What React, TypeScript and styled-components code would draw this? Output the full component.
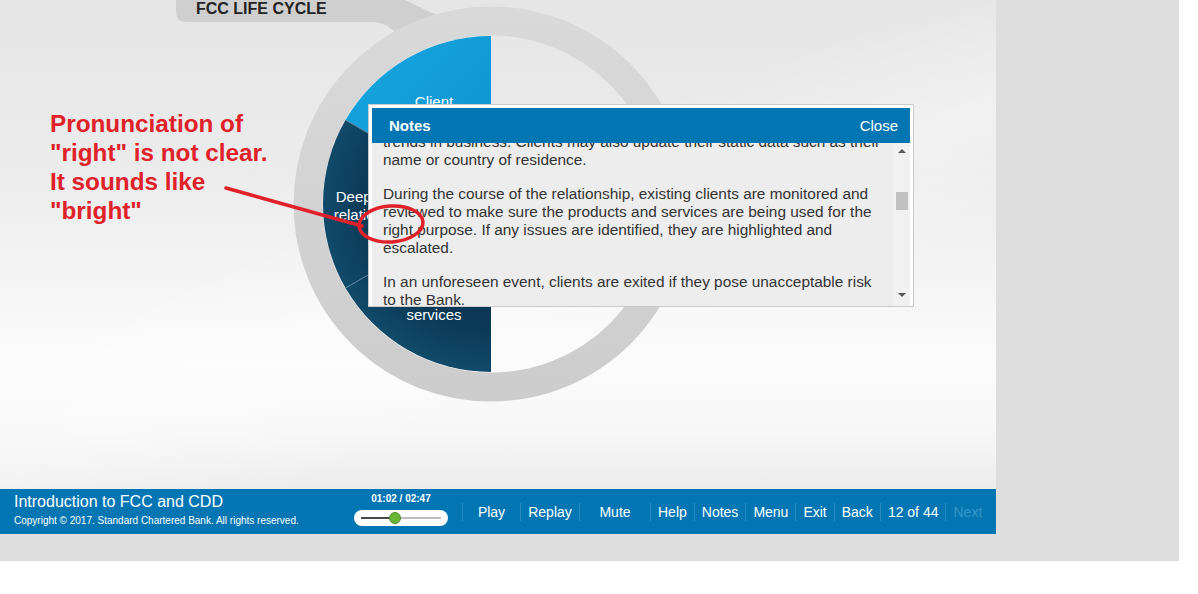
import React from "react";
import styled, { createGlobalStyle } from "styled-components";

const GlobalStyle = createGlobalStyle`
  html, body { margin: 0; padding: 0; background: #ffffff; }
  body { font-family: "Liberation Sans", Arial, sans-serif; }
  * { box-sizing: border-box; }
`;

const Frame = styled.div`
  width: 1179px;
  height: 561px;
  background: #dedede;
`;

const Player = styled.div`
  width: 996px;
  display: flex;
  flex-direction: column;
`;

const Stage = styled.div`
  position: relative;
  height: 489px;
  overflow: hidden;
  background:
    linear-gradient(160deg, rgba(255,255,255,0) 40%, rgba(255,255,255,0.35) 55%, rgba(255,255,255,0) 70%),
    linear-gradient(180deg, #e6e6e6 0%, #ececec 35%, #f5f5f5 58%, #fcfcfc 74%, #f7f7f7 88%, #ededed 100%);
`;

const Diagram = styled.svg`
  display: block;
`;

const Overlay = styled.svg`
  position: absolute;
  left: 0;
  top: 0;
  pointer-events: none;
`;

const Annotation = styled.div`
  position: absolute;
  left: 50px;
  top: 109px;
  color: #e0212a;
  font-weight: bold;
  font-size: 24.3px;
  line-height: 29px;
  white-space: nowrap;
`;

const NotesPanel = styled.div`
  position: absolute;
  left: 368px;
  top: 104px;
  width: 546px;
  height: 203px;
  border: 1px solid #cbcbcb;
  background: #ffffff;
  padding: 3px 3px 0 3px;
  display: flex;
  flex-direction: column;
`;

const NotesHeader = styled.div`
  height: 35px;
  background: #0276b3;
  color: #ffffff;
  display: flex;
  align-items: center;
  justify-content: space-between;
  padding: 0 12px 0 17px;
`;

const NotesTitle = styled.span`
  font-weight: bold;
  font-size: 15px;
`;

const CloseButton = styled.span`
  font-size: 15px;
`;

const NotesBody = styled.div`
  flex: 1;
  display: flex;
  background: #ededed;
  overflow: hidden;
`;

const NotesViewport = styled.div`
  flex: 1;
  overflow: hidden;
  padding-left: 11px;
`;

const NotesText = styled.div<{ $offset: number }>`
  transform: translateY(${(p) => -p.$offset}px);
  color: #333333;
  font-size: 15.4px;
  line-height: 18px;
`;

const Paragraph = styled.p`
  margin: 0 0 16px 0;
`;

const Line = styled.span`
  display: block;
  white-space: nowrap;
`;

const ScrollBar = styled.div`
  width: 17px;
  background: #f1f1f1;
  position: relative;
  display: flex;
  flex-direction: column;
  align-items: center;
  justify-content: space-between;
  padding: 6px 0 9px 0;
`;

const Arrow = styled.span<{ $down?: boolean }>`
  width: 0;
  height: 0;
  border-left: 4px solid transparent;
  border-right: 4px solid transparent;
  ${(p) => (p.$down ? "border-top: 4px solid #555;" : "border-bottom: 4px solid #555;")}
`;

const Thumb = styled.span`
  position: absolute;
  left: 3px;
  top: 49px;
  width: 12px;
  height: 18px;
  background: #c1c1c1;
`;

const Footer = styled.footer`
  height: 45px;
  background: #0276b3;
  color: #ffffff;
  display: flex;
  padding-left: 14px;
`;

const CourseInfo = styled.div`
  width: 340px;
  display: flex;
  flex-direction: column;
  padding-top: 3px;
`;

const CourseTitle = styled.div`
  font-size: 16px;
  line-height: 20px;
`;

const Copyright = styled.div`
  font-size: 10px;
  line-height: 14px;
  margin-top: 2px;
`;

const TimeBlock = styled.div`
  width: 94px;
  display: flex;
  flex-direction: column;
  align-items: center;
  padding-top: 4px;
`;

const TimeText = styled.div`
  font-size: 10px;
  font-weight: bold;
  line-height: 12px;
`;

const SliderPill = styled.div`
  margin-top: 5px;
  width: 94px;
  height: 16px;
  border-radius: 8px;
  background: #ffffff;
  position: relative;
  display: flex;
  align-items: center;
  padding: 0 7px;
`;

const Track = styled.div`
  flex: 1;
  height: 2px;
  background: #bdbdbd;
  position: relative;
`;

const TrackFill = styled.div`
  position: absolute;
  left: 0;
  top: 0;
  height: 2px;
  background: #4a4a4a;
`;

const Knob = styled.span`
  position: absolute;
  top: -5px;
  width: 12px;
  height: 12px;
  margin-left: -6px;
  border-radius: 50%;
  background: #6ab536;
  border: 1px solid #4e8f28;
`;

const Nav = styled.nav`
  display: flex;
  align-items: center;
  margin-left: 14px;
`;

const NavItem = styled.span<{ $width?: number; $disabled?: boolean }>`
  height: 18px;
  line-height: 18px;
  font-size: 14px;
  border-left: 1px solid #2a8cc2;
  padding: 0 7px;
  text-align: center;
  white-space: nowrap;
  ${(p) => (p.$width ? `width: ${p.$width}px;` : "")}
  color: ${(p) => (p.$disabled ? "#3a94c6" : "#ffffff")};
`;

const C = { x: 491, y: 204 };

const navItems: { label: string; width?: number; disabled?: boolean }[] = [
  { label: "Play", width: 58 },
  { label: "Replay", width: 59 },
  { label: "Mute", width: 71 },
  { label: "Help" },
  { label: "Notes" },
  { label: "Menu" },
  { label: "Exit" },
  { label: "Back" },
  { label: "12 of 44" },
  { label: "Next", disabled: true },
];

function LifeCycle() {
  return (
    <Diagram width={996} height={489} viewBox="0 0 996 489">
      <defs>
        <linearGradient id="ringGrad" x1="0" y1="0" x2="0" y2="1">
          <stop offset="0" stopColor="#d9d9d9" />
          <stop offset="1" stopColor="#cdcdcd" />
        </linearGradient>
        <linearGradient id="blueGrad" x1="0" y1="0" x2="1" y2="1">
          <stop offset="0" stopColor="#18a6de" />
          <stop offset="1" stopColor="#0a92d0" />
        </linearGradient>
        <radialGradient id="navyGrad" cx={C.x} cy={C.y} r={168} gradientUnits="userSpaceOnUse">
          <stop offset="0" stopColor="#06293f" />
          <stop offset="0.75" stopColor="#0b3a57" />
          <stop offset="1" stopColor="#114a69" />
        </radialGradient>
      </defs>
      <path
        d="M176,0 H405 L447,20 L398,36 Q388,22 372,22 H186 Q176,22 176,12 Z"
        fill="#cfcfcf"
      />
      <text x={196} y={14} fontFamily="Liberation Sans, Arial, sans-serif" fontWeight="bold" fontSize={16} fill="#222">
        FCC LIFE CYCLE
      </text>
      <circle cx={C.x} cy={C.y} r={183} fill="none" stroke="url(#ringGrad)" strokeWidth={29} />
      <path d={`M${C.x},${C.y} L491,36 A168,168 0 0 0 345.5,120 Z`} fill="url(#blueGrad)" />
      <path d={`M${C.x},${C.y} L345.5,120 A168,168 0 0 0 345.5,288 Z`} fill="url(#navyGrad)" />
      <path d={`M${C.x},${C.y} L345.5,288 A168,168 0 0 0 491,372 Z`} fill="url(#navyGrad)" />
      <line x1={C.x} y1={C.y} x2={345.5} y2={120} stroke="#5f86a0" strokeWidth={1} />
      <line x1={C.x} y1={C.y} x2={345.5} y2={288} stroke="#5f86a0" strokeWidth={1} />
      <g fontFamily="Liberation Sans, Arial, sans-serif" fontSize={15} fill="#ffffff" textAnchor="middle">
        <text x={434} y={107}>Client</text>
        <text x={372} y={202}>Deepening</text>
        <text x={372} y={220}>relationship</text>
        <text x={434} y={320}>services</text>
      </g>
    </Diagram>
  );
}

function Notes() {
  return (
    <NotesPanel>
      <NotesHeader>
        <NotesTitle>Notes</NotesTitle>
        <CloseButton>Close</CloseButton>
      </NotesHeader>
      <NotesBody>
        <NotesViewport>
          <NotesText $offset={10}>
            <Paragraph>
              <Line>trends in business. Clients may also update their static data such as their</Line>
              <Line>name or country of residence.</Line>
            </Paragraph>
            <Paragraph>
              <Line>During the course of the relationship, existing clients are monitored and</Line>
              <Line>reviewed to make sure the products and services are being used for the</Line>
              <Line>right purpose. If any issues are identified, they are highlighted and</Line>
              <Line>escalated.</Line>
            </Paragraph>
            <Paragraph>
              <Line>In an unforeseen event, clients are exited if they pose unacceptable risk</Line>
              <Line>to the Bank.</Line>
            </Paragraph>
          </NotesText>
        </NotesViewport>
        <ScrollBar>
          <Arrow />
          <Thumb />
          <Arrow $down />
        </ScrollBar>
      </NotesBody>
    </NotesPanel>
  );
}

export default function App() {
  const progress = 34;
  return (
    <>
      <GlobalStyle />
      <Frame>
        <Player>
          <Stage>
            <LifeCycle />
            <Notes />
            <Annotation>
              Pronunciation of
              <br />
              "right" is not clear.
              <br />
              It sounds like
              <br />
              "bright"
            </Annotation>
            <Overlay width={996} height={489} viewBox="0 0 996 489">
              <line x1={226} y1={188} x2={362} y2={226} stroke="#e0212a" strokeWidth={3.5} strokeLinecap="round" />
              <ellipse cx={391} cy={224} rx={32} ry={18} fill="none" stroke="#e0212a" strokeWidth={3.5} transform="rotate(-4 391 224)" />
            </Overlay>
          </Stage>
          <Footer>
            <CourseInfo>
              <CourseTitle>Introduction to FCC and CDD</CourseTitle>
              <Copyright>Copyright © 2017. Standard Chartered Bank. All rights reserved.</Copyright>
            </CourseInfo>
            <TimeBlock>
              <TimeText>01:02 / 02:47</TimeText>
              <SliderPill>
                <Track>
                  <TrackFill style={{ width: `${progress}px` }} />
                  <Knob style={{ left: `${progress}px` }} />
                </Track>
              </SliderPill>
            </TimeBlock>
            <Nav>
              {navItems.map((item) => (
                <NavItem key={item.label} $width={item.width} $disabled={item.disabled}>
                  {item.label}
                </NavItem>
              ))}
            </Nav>
          </Footer>
        </Player>
      </Frame>
    </>
  );
}
